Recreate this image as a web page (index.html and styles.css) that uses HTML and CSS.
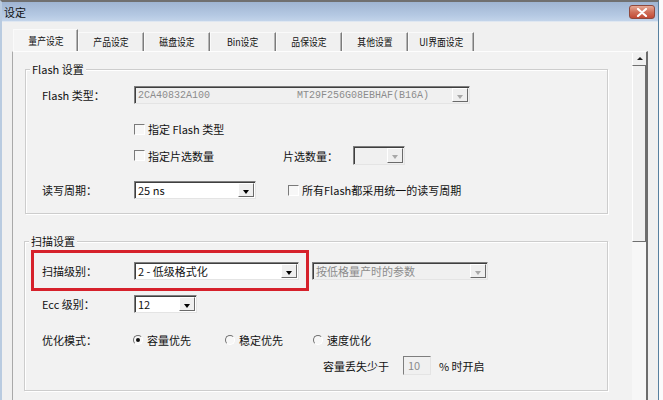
FILE: index.html
```html
<!DOCTYPE html>
<html lang="zh-CN">
    <head>
        <meta charset="UTF-8" />
        <title>设定</title>
        <link rel="stylesheet" href="styles.css">
    </head>
    <body>
        <div class="desk">
            <div class="window">
                <div class="titlebar">
                    <span class="title">设定</span>
                    <span class="close">
                        <svg width="12" height="9" viewBox="0 0 12 9"><path d="M2 1 L10 8 M10 1 L2 8" stroke="#fff" stroke-width="2.2" stroke-linecap="round"/></svg>
                    </span>
                </div>
                <div class="client">
                    <ul class="tabs">
                        <li class="active"><span>量产设定</span></li>
                        <li><span>产品设定</span></li>
                        <li><span>磁盘设定</span></li>
                        <li><span>Bin设定</span></li>
                        <li><span>品保设定</span></li>
                        <li><span>其他设置</span></li>
                        <li><span>UI界面设定</span></li>
                    </ul>
                    <div class="page">
                        <div class="content">
                            <!-- Flash 设置 -->
                            <div class="group g1">
                                <span class="legend">Flash 设置</span>
                                <div class="row r-type">
                                    <span class="label">Flash 类型：</span>
                                    <div class="combo disabled w-type">
                                        <span class="val mono"><i>2CA40832A100</i><i>MT29F256G08EBHAF(B16A)</i></span>
                                        <span class="btn"></span>
                                    </div>
                                </div>
                                <div class="row r-check1">
                                    <span class="label"></span>
                                    <span class="check"><b></b>指定 Flash 类型</span>
                                </div>
                                <div class="row r-check2">
                                    <span class="label"></span>
                                    <span class="check cell-ce"><b></b>指定片选数量</span>
                                    <span class="sublabel">片选数量：</span>
                                    <div class="combo disabled w-ce">
                                        <span class="val"></span>
                                        <span class="btn"></span>
                                    </div>
                                </div>
                                <div class="row r-cycle">
                                    <span class="label">读写周期：</span>
                                    <div class="combo w-cycle">
                                        <span class="val">25 ns</span>
                                        <span class="btn"></span>
                                    </div>
                                    <span class="check all-flash"><b></b>所有Flash都采用统一的读写周期</span>
                                </div>
                            </div>

                            <!-- 扫描设置 -->
                            <div class="group g2">
                                <span class="legend">扫描设置</span>
                                <span class="mark"></span>
                                <div class="row r-scan">
                                    <span class="label">扫描级别：</span>
                                    <div class="combo w-scan">
                                        <span class="val">2 - 低级格式化</span>
                                        <span class="btn"></span>
                                    </div>
                                    <div class="combo disabled w-param">
                                        <span class="val">按低格量产时的参数</span>
                                        <span class="btn"></span>
                                    </div>
                                </div>
                                <div class="row r-ecc">
                                    <span class="label">Ecc 级别：</span>
                                    <div class="combo w-ecc">
                                        <span class="val">12</span>
                                        <span class="btn"></span>
                                    </div>
                                </div>
                                <div class="row r-mode">
                                    <span class="label mode-label">优化模式：</span>
                                    <span class="radio cell-r1 on"><b></b>容量优先</span>
                                    <span class="radio cell-r2"><b></b>稳定优先</span>
                                    <span class="radio"><b></b>速度优化</span>
                                </div>
                                <div class="row r-loss">
                                    <span class="loss-label">容量丢失少于</span>
                                    <span class="field">10</span>
                                    <span class="unit">% 时开启</span>
                                </div>
                            </div>
                        </div>
                        <div class="scrollbar">
                            <div class="sb-up"></div>
                            <div class="sb-thumb"></div>
                        </div>
                    </div>
                </div>
            </div>
            <div class="outside"></div>
        </div>
    </body>
</html>
```

FILE: styles.css
```css
* {
    margin: 0;
    padding: 0;
    box-sizing: border-box;
}
body {
    background: #fff;
    font-family: "Liberation Sans Narrow", "Noto Sans CJK SC", sans-serif;
    font-size: 11px;
    color: #111;
}
.desk {
    display: flex;
    width: 663px;
    height: 400px;
    overflow: hidden;
}
.window {
    flex: none;
    width: 659px;
    height: 400px;
    display: flex;
    flex-direction: column;
    border-top: 2px solid #707070;
    border-left: 2px solid #b9cbe0;
    border-right: 1px solid #57809f;
    background: #f0f0f0;
}
.outside {
    flex: 1;
    background: #fbfbfb;
}

/* 标题栏 */
.titlebar {
    height: 20px;
    display: flex;
    justify-content: space-between;
    align-items: flex-start;
    background: linear-gradient(#9fb5d2, #b5c9e3 70%, #c3d4ea);
    border-bottom: 1px solid #dfe7f1;
}
.title {
    padding: 3px 0 0 2px;
    line-height: 14px;
}
.close {
    margin: 3px 3px 0 0;
    width: 26px;
    height: 14px;
    display: flex;
    align-items: center;
    justify-content: center;
    border: 1px solid #8f4a3e;
    border-radius: 3px;
    background: linear-gradient(#e6a996, #d0705a 50%, #c24a35);
}

/* 选项卡 */
.client {
    flex: 1;
    padding: 7px 0 0 10px;
    display: flex;
    flex-direction: column;
}
.tabs {
    list-style: none;
    display: flex;
    align-items: flex-end;
    height: 22px;
    margin-left: 1px;
}
.tabs li {
    width: 66px;
    height: 19px;
    text-align: center;
    line-height: 17px;
    border-top: 1px solid #fafafa;
    border-left: 1px solid #fafafa;
    border-right: 1px solid #7c7c7c;
    box-shadow: inset -1px 0 #b4b4b4;
}
.tabs li span {
    display: inline-block;
    font-size: 10.5px;
    transform: scaleX(0.84);
}
.tabs li.active {
    width: 65px;
    height: 22px;
    line-height: 20px;
    background: #f4f4f4;
}

.page {
    width: 636px;
    flex: 1;
    display: flex;
    border-top: 1px solid #fdfdfd;
    border-left: 1px solid #a9a9a9;
    border-right: 2px solid #6d6d6d;
    background: #f2f2f2;
}
.content {
    flex: 1;
    padding-left: 12px;
}

/* 滚动条 */
.scrollbar {
    width: 14px;
    margin-top: 1px;
    background: #f7f7f7;
}
.sb-up {
    height: 12px;
    position: relative;
    background: #f0f0f0;
    border-left: 1px solid #fff;
}
.sb-up::after {
    content: "";
    position: absolute;
    left: 4px;
    top: 4px;
    border-left: 3px solid transparent;
    border-right: 3px solid transparent;
    border-bottom: 3px solid #222;
}
.sb-thumb {
    height: 177px;
    background: #f0f0f0;
    border-top: 1px solid #6f6f6f;
    border-left: 1px solid #fff;
    border-right: 1px solid #6f6f6f;
    border-bottom: 1px solid #6f6f6f;
}

/* 分组框 */
.group {
    position: relative;
    width: 583px;
    border: 1px solid #cdcdcd;
    box-shadow: inset 1px 1px #fff, 1px 1px #fff;
    padding-left: 16px;
}
.g1 {
    margin-top: 17px;
    height: 145px;
    padding-top: 16px;
}
.g2 {
    margin-top: 27px;
    margin-left: -1px;
    width: 584px;
    height: 150px;
    padding-top: 20px;
    padding-left: 17px;
}
.legend {
    position: absolute;
    top: -8px;
    left: 4px;
    padding: 0 2px;
    line-height: 15px;
    background: #f2f2f2;
}
.mark {
    position: absolute;
    left: 6px;
    top: 8px;
    width: 278px;
    height: 41px;
    border: 3px solid #d6212b;
}

.row {
    display: flex;
    align-items: center;
}
.label {
    flex: none;
    width: 92px;
}
.r-type,
.r-cycle,
.r-scan,
.r-ecc {
    height: 18px;
}
.r-check1 {
    height: 16px;
    margin-top: 17px;
}
.r-check2 {
    height: 19px;
    margin-top: 9px;
}
.r-cycle {
    margin-top: 16px;
}
.r-ecc {
    margin-top: 15px;
}
.r-mode {
    height: 16px;
    margin-top: 19px;
}
.r-loss {
    height: 19px;
    margin-top: 8px;
    padding-left: 281px;
}

/* 下拉框 */
.combo {
    flex: none;
    height: 100%;
    display: flex;
    background: #fff;
    border: 1px solid;
    border-color: #7e7e7e #e4e4e4 #e4e4e4 #7e7e7e;
    box-shadow: inset 1px 1px #3f3f3f;
}
.combo .val {
    flex: 1;
    padding: 1px 0 0 3px;
    line-height: 15px;
    white-space: nowrap;
    overflow: hidden;
}
.combo .btn {
    position: relative;
    width: 16px;
    margin: 1px 1px 1px 0;
    background: #efefef;
    border-top: 1px solid #fff;
    border-left: 1px solid #fff;
    border-right: 1px solid #6a6a6a;
    border-bottom: 1px solid #6a6a6a;
}
.combo .btn::after {
    content: "";
    position: absolute;
    left: 4px;
    top: 6px;
    border-left: 3px solid transparent;
    border-right: 3px solid transparent;
    border-top: 4px solid #000;
}
.combo.disabled {
    background: #f0f0f0;
    color: #8c8c8c;
}
.combo.disabled .btn::after {
    border-top-color: #a8a8a8;
}
.mono {
    font-family: "Liberation Mono", monospace;
    font-size: 10px;
}
.mono i {
    font-style: normal;
    display: inline-block;
}
.mono i:first-child {
    width: 159px;
}
.w-type {
    width: 336px;
}
.w-ce {
    width: 52px;
}
.w-cycle {
    width: 122px;
}
.w-scan {
    width: 165px;
}
.w-param {
    width: 176px;
    margin-left: 13px;
}
.w-ecc {
    width: 63px;
}

/* 复选框、单选框 */
.check,
.radio {
    display: flex;
    align-items: center;
    white-space: nowrap;
}
.check b {
    width: 11px;
    height: 11px;
    margin-right: 3px;
    background: #f7f7f7;
    border: 1px solid;
    border-color: #7a7a7a #fff #fff #7a7a7a;
}
.cell-ce {
    width: 149px;
}
.sublabel {
    width: 70px;
}
.all-flash {
    margin-left: 32px;
}
.mode-label {
    width: 91px;
}
.radio b {
    position: relative;
    width: 10px;
    height: 10px;
    margin-right: 4px;
    border-radius: 50%;
    border: 1px solid;
    border-color: #6f6f6f #fff #fff #6f6f6f;
    background: #f7f7f7;
}
.radio.on b::after {
    content: "";
    position: absolute;
    left: 2px;
    top: 2px;
    width: 4px;
    height: 4px;
    border-radius: 50%;
    background: #111;
}
.cell-r1 {
    width: 92px;
}
.cell-r2 {
    width: 88px;
}

.loss-label {
    width: 80px;
}
.field {
    width: 28px;
    height: 100%;
    padding: 1px 0 0 4px;
    line-height: 15px;
    color: #8c8c8c;
    background: #f0f0f0;
    border: 1px solid;
    border-color: #7e7e7e #e4e4e4 #e4e4e4 #7e7e7e;
}
.unit {
    margin-left: 8px;
}
```
